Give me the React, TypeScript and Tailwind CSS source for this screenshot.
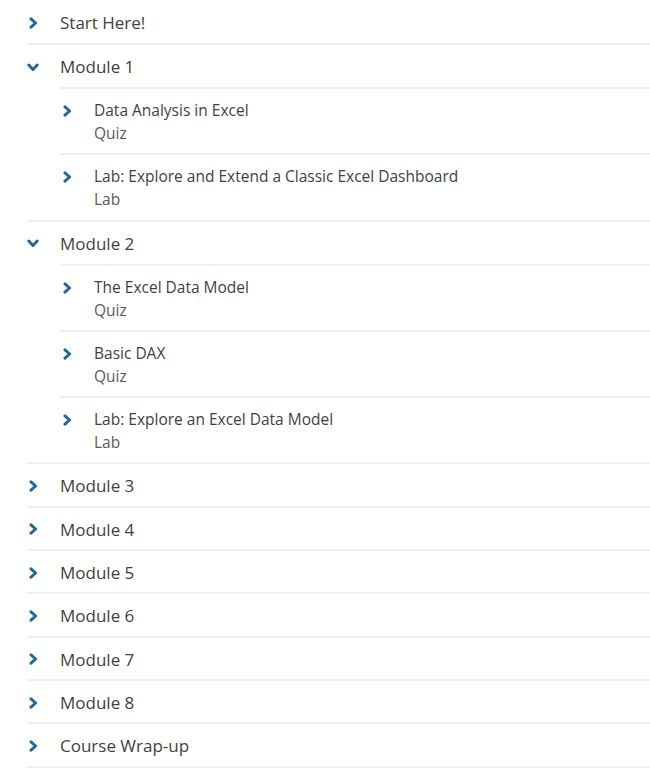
import React from "react";

const Right = () => (
  <svg width="9" height="12" viewBox="0 0 9 12" className="block">
    <path d="M2 1.8 L6.6 6 L2 10.2" fill="none" stroke="#1f6b99" strokeWidth="3" strokeLinecap="round" strokeLinejoin="round" />
  </svg>
);
const Down = () => (
  <svg width="12" height="9" viewBox="0 0 12 9" className="block">
    <path d="M1.8 2 L6 6.6 L10.2 2" fill="none" stroke="#1f6b99" strokeWidth="3" strokeLinecap="round" strokeLinejoin="round" />
  </svg>
);

type Sub = { title: string; kind: string };

const TopRow = ({ label, h }: { label: string; h: string }) => (
  <div className={`flex items-center pt-[2px] border-b-2 border-[#efefef] ${h}`}>
    <div className="w-[33px] pl-[2px] flex items-center">
      <Right />
    </div>
    <span className="text-[17px] text-[#3f3f3f]">{label}</span>
  </div>
);

const SubRow = ({ s }: { s: Sub }) => (
  <div className="flex ml-[33px] h-[66.3px] pt-[10px] border-t-2 border-[#efefef]">
    <div className="w-[34px] pl-[3px] pt-[6px]">
      <Right />
    </div>
    <div className="flex flex-col">
      <span className="text-[15.5px] leading-[23px] text-[#3f3f3f]">{s.title}</span>
      <span className="text-[15.5px] leading-[23px] text-[#5a5a5a]">{s.kind}</span>
    </div>
  </div>
);

const ExpandedModule = ({ label, subs }: { label: string; subs: Sub[] }) => (
  <div className="border-b-2 border-[#efefef]">
    <div className="flex items-center pt-[2px] h-[42px]">
      <div className="w-[33px] flex items-center">
        <Down />
      </div>
      <span className="text-[17px] text-[#3f3f3f]">{label}</span>
    </div>
    {subs.map((s, i) => (
      <SubRow key={i} s={s} />
    ))}
  </div>
);

export default function App() {
  return (
    <div className="w-[650px] h-[781px] bg-white pl-[27px]" style={{ fontFamily: '"Open Sans", "Noto Sans", sans-serif' }}>
      <TopRow label="Start Here!" h="h-[45px]" />
      <ExpandedModule
        label="Module 1"
        subs={[
          { title: "Data Analysis in Excel", kind: "Quiz" },
          { title: "Lab: Explore and Extend a Classic Excel Dashboard", kind: "Lab" },
        ]}
      />
      <ExpandedModule
        label="Module 2"
        subs={[
          { title: "The Excel Data Model", kind: "Quiz" },
          { title: "Basic DAX", kind: "Quiz" },
          { title: "Lab: Explore an Excel Data Model", kind: "Lab" },
        ]}
      />
      {["Module 3", "Module 4", "Module 5", "Module 6", "Module 7", "Module 8", "Course Wrap-up"].map((m) => (
        <TopRow key={m} label={m} h="h-[43.3px]" />
      ))}
    </div>
  );
}
